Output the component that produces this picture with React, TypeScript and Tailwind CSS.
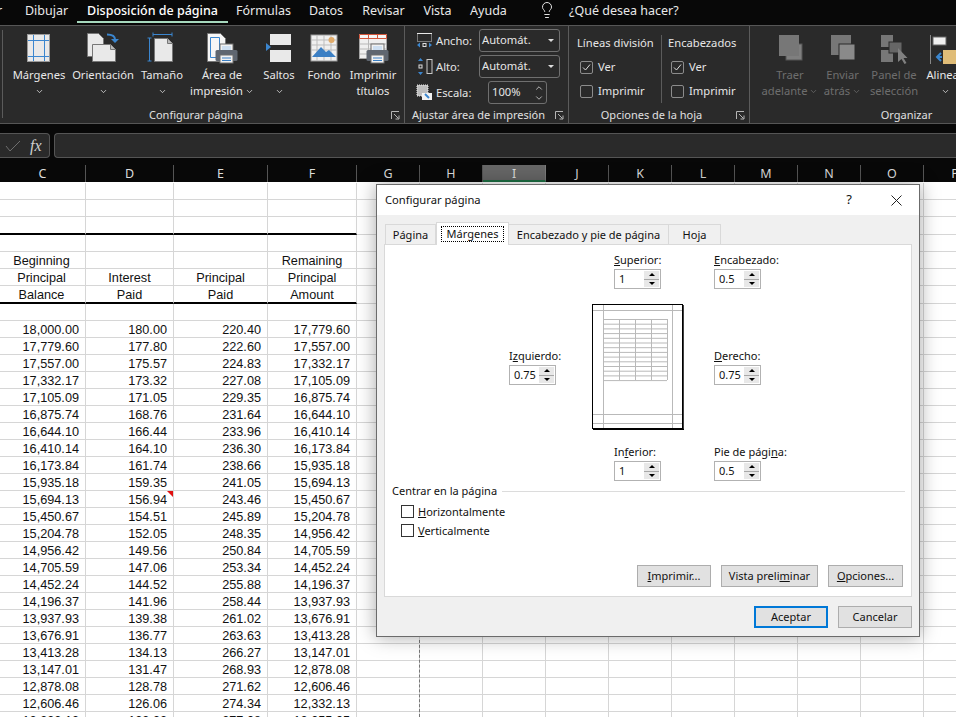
import { ChevronDown, ChevronUp, Lightbulb } from "lucide-react";

const ui = "font-['Noto_Sans',sans-serif]";

const sheetRows = [
  ["18,000.00", "180.00", "220.40", "17,779.60"],
  ["17,779.60", "177.80", "222.60", "17,557.00"],
  ["17,557.00", "175.57", "224.83", "17,332.17"],
  ["17,332.17", "173.32", "227.08", "17,105.09"],
  ["17,105.09", "171.05", "229.35", "16,875.74"],
  ["16,875.74", "168.76", "231.64", "16,644.10"],
  ["16,644.10", "166.44", "233.96", "16,410.14"],
  ["16,410.14", "164.10", "236.30", "16,173.84"],
  ["16,173.84", "161.74", "238.66", "15,935.18"],
  ["15,935.18", "159.35", "241.05", "15,694.13"],
  ["15,694.13", "156.94", "243.46", "15,450.67"],
  ["15,450.67", "154.51", "245.89", "15,204.78"],
  ["15,204.78", "152.05", "248.35", "14,956.42"],
  ["14,956.42", "149.56", "250.84", "14,705.59"],
  ["14,705.59", "147.06", "253.34", "14,452.24"],
  ["14,452.24", "144.52", "255.88", "14,196.37"],
  ["14,196.37", "141.96", "258.44", "13,937.93"],
  ["13,937.93", "139.38", "261.02", "13,676.91"],
  ["13,676.91", "136.77", "263.63", "13,413.28"],
  ["13,413.28", "134.13", "266.27", "13,147.01"],
  ["13,147.01", "131.47", "268.93", "12,878.08"],
  ["12,878.08", "128.78", "271.62", "12,606.46"],
  ["12,606.46", "126.06", "274.34", "12,332.13"],
  ["12,332.13", "123.32", "277.08", "12,055.05"],
];

const topRows: { h: string; cells: string[]; thick?: boolean }[] = [
  { h: "h-[17px]", cells: ["", "", "", ""] },
  { h: "h-[17px]", cells: ["", "", "", ""] },
  { h: "h-[18px]", cells: ["", "", "", ""], thick: true },
  { h: "h-[17px]", cells: ["", "", "", ""] },
  { h: "h-[17px]", cells: ["Beginning", "", "", "Remaining"] },
  { h: "h-[17px]", cells: ["Principal", "Interest", "Principal", "Principal"] },
  { h: "h-[18px]", cells: ["Balance", "Paid", "Paid", "Amount"], thick: true },
  { h: "h-[17px]", cells: ["", "", "", ""] },
];

const colW = ["w-[88px]", "w-[88px]", "w-[94px]", "w-[89px]"];
const extra = Array.from({ length: 10 }, (_, i) => i);

function EmptyCols() {
  return (
    <>
      {extra.map((i) => (
        <div key={i} className="h-full w-[63px] shrink-0 border-r border-b border-[#d6d6d6]" />
      ))}
    </>
  );
}

function Sheet() {
  return (
    <div className="ml-[-2px] h-[535px] overflow-hidden bg-white pt-px font-['Liberation_Sans',sans-serif] text-[12.7px] leading-[18px] text-[#111]">
      {topRows.map((r, i) => (
        <div key={i} className={`flex ${r.h}`}>
          {r.cells.map((c, j) => (
            <div
              key={j}
              className={`${colW[j]} shrink-0 border-r border-[#d6d6d6] text-center ${
                r.thick ? "border-b-2 border-b-black" : "border-b border-b-[#d6d6d6]"
              }`}
            >
              {c}
            </div>
          ))}
          <EmptyCols />
        </div>
      ))}
      {sheetRows.map((r, i) => (
        <div key={i} className="flex h-[17px]">
          {r.map((c, j) => (
            <div
              key={j}
              className={`${colW[j]} relative shrink-0 border-r border-b border-[#d6d6d6] pr-[6px] text-right`}
            >
              {c}
              {i === 10 && j === 1 && (
                <span className="absolute top-0 right-0 h-0 w-0 border-t-[6px] border-l-[6px] border-t-[#e01010] border-l-transparent" />
              )}
            </div>
          ))}
          <EmptyCols />
        </div>
      ))}
    </div>
  );
}

function Printer({ x, y }: { x: number; y: number }) {
  return (
    <g transform={`translate(${x} ${y})`}>
      <rect x="5" y="0" width="13" height="8" fill="#f2f2f2" stroke="#6d6d6d" />
      <rect x="7" y="2" width="9" height="4" fill="#cfe0f2" />
      <rect x="0.5" y="6" width="22" height="11" rx="1.5" fill="#5f6670" />
      <rect x="5" y="11" width="13" height="8" fill="#f2f2f2" stroke="#6d6d6d" />
      <path d="M7 14h9M7 16.5h9" stroke="#3a7fc4" />
    </g>
  );
}

const page = "#e9e9e9";
const blue = "#3b86cf";

function IconMargins() {
  return (
    <svg width="32" height="32" viewBox="0 0 32 32">
      <rect x="4.5" y="2.5" width="22" height="27" fill={page} stroke="#9a9a9a" />
      <path d="M10.5 3v26M21.5 3v26M5 8.5h21M5 24.5h21" stroke={blue} />
    </svg>
  );
}

function IconOrientation() {
  return (
    <svg width="32" height="32" viewBox="0 0 32 32">
      <path d="M0.5 1.5h11l5 5v18h-16z" fill={page} stroke="#777" />
      <path d="M5.5 12.5h18l5 5v12h-23z" fill={page} stroke="#777" />
      <path d="M23.5 12.5v5h5" fill="#bbb" stroke="#777" />
      <path d="M20 2.5c5 0 8 1 8 5" fill="none" stroke={blue} strokeWidth="2" />
      <path d="M24 7h8l-4 4z" fill={blue} />
    </svg>
  );
}

function IconSize() {
  return (
    <svg width="32" height="32" viewBox="0 0 32 32">
      <path d="M8.5 6.5h13l5 5v18h-18z" fill={page} stroke="#777" />
      <path d="M21.5 6.5v5h5" fill="#bbb" stroke="#777" />
      <path d="M7 2.5h19M7 0.5v4M26 0.5v4M3.5 6v23M1.5 6h4M1.5 29h4" stroke={blue} fill="none" />
    </svg>
  );
}

function IconArea() {
  return (
    <svg width="32" height="32" viewBox="0 0 32 32">
      <path d="M1.5 1.5h13l5 5v23h-18z" fill="#f6f6f6" stroke="#777" />
      <path d="M4.5 5.5h9v20h-9z" fill="none" stroke={blue} />
      <Printer x={9} y={12} />
    </svg>
  );
}

function IconBreaks() {
  return (
    <svg width="32" height="32" viewBox="0 0 32 32">
      <rect x="7" y="2" width="21" height="11" fill={page} />
      <rect x="7" y="18" width="21" height="12" fill={page} />
      <path d="M3 11l5 4-5 4z" fill={blue} />
    </svg>
  );
}

function IconBackground() {
  return (
    <svg width="32" height="32" viewBox="0 0 32 32">
      <rect x="3" y="3" width="26" height="26" fill="#f0f0f0" stroke="#9a9a9a" />
      <path d="M3 8h26M3 13h26M3 18h26M9 3v26M16 3v26M23 3v26" stroke="#bdbdbd" />
      <circle cx="23.5" cy="8" r="3" fill="#e0ab6a" />
      <path d="M4 25l9-10 5 5 3-2 7 7z" fill="#3b7fc4" />
    </svg>
  );
}

function IconTitles() {
  return (
    <svg width="32" height="32" viewBox="0 0 32 32">
      <rect x="2.5" y="2.5" width="27" height="24" fill="#f0f0f0" stroke="#a5a5a5" />
      <path d="M2.5 2.5h27v4h-27z" fill="#f6f6f6" stroke="#d2553a" />
      <path d="M11.5 3v4M20.5 3v4" stroke="#d2553a" />
      <path d="M3 12h26M3 17h26M3 22h26M11.5 7v19" stroke="#b8b8b8" />
      <Printer x={9} y={12} />
    </svg>
  );
}

function IconFront() {
  return (
    <svg width="32" height="32" viewBox="0 0 32 32">
      <rect x="12" y="12" width="16" height="16" fill="#7f7f7f" stroke="#555" />
      <rect x="5" y="3" width="20" height="21" fill="#777" />
    </svg>
  );
}

function IconBack() {
  return (
    <svg width="32" height="32" viewBox="0 0 32 32">
      <rect x="4" y="3" width="20" height="20" fill="#777" />
      <rect x="12" y="12" width="16" height="16" fill="#8a8a8a" stroke="#2b2b2b" />
    </svg>
  );
}

function IconSelection() {
  return (
    <svg width="32" height="32" viewBox="0 0 32 32">
      <rect x="3" y="3" width="12" height="12" fill="#777" />
      <rect x="3" y="18" width="12" height="12" fill="#777" />
      <rect x="11" y="10" width="13" height="11" fill="#666" stroke="#2b2b2b" />
      <path d="M20 16v14l3.5-3 3 5 2-1-3-5h4z" fill="#808080" />
    </svg>
  );
}

function IconAlign() {
  return (
    <svg width="32" height="32" viewBox="0 0 32 32">
      <path d="M1.5 3v29" stroke="#888" />
      <rect x="4" y="5" width="13" height="8" fill="#f0f0f0" stroke="#666" />
      <rect x="14" y="18" width="18" height="14" fill="#e0bd78" />
      <path d="M12 21l-4 4 4 4M8 25h5" stroke={blue} strokeWidth="2" fill="none" />
    </svg>
  );
}

const largeButtons = [
  { w: "w-[64px]", icon: <IconMargins />, top: "Márgenes", bottom: "", caret: "below" },
  { w: "w-[64px]", icon: <IconOrientation />, top: "Orientación", bottom: "", caret: "below" },
  { w: "w-[54px]", icon: <IconSize />, top: "Tamaño", bottom: "", caret: "below" },
  { w: "w-[66px]", icon: <IconArea />, top: "Área de", bottom: "impresión", caret: "inline" },
  { w: "w-[48px]", icon: <IconBreaks />, top: "Saltos", bottom: "", caret: "below" },
  { w: "w-[42px]", icon: <IconBackground />, top: "Fondo", bottom: "", caret: "" },
  { w: "w-[56px]", icon: <IconTitles />, top: "Imprimir", bottom: "títulos", caret: "" },
];

const arrangeButtons = [
  { w: "w-[52px]", icon: <IconFront />, top: "Traer", bottom: "adelante", caret: "inline", off: true },
  { w: "w-[53px]", icon: <IconBack />, top: "Enviar", bottom: "atrás", caret: "inline", off: true },
  { w: "w-[50px]", icon: <IconSelection />, top: "Panel de", bottom: "selección", caret: "", off: true },
  { w: "w-[52px]", icon: <IconAlign />, top: "Alinear", bottom: "", caret: "below", off: false },
];

function LargeButton(props: {
  w: string;
  icon: React.ReactNode;
  top: string;
  bottom: string;
  caret: string;
  off?: boolean;
}) {
  return (
    <div
      className={`${props.w} flex shrink-0 flex-col items-center text-[11.2px] leading-[16px] whitespace-nowrap ${
        props.off ? "text-[#6e6e6e]" : "text-[#e8e8e8]"
      }`}
    >
      <div className="mb-[3px] h-[32px]">{props.icon}</div>
      <span>{props.top}</span>
      <span className="flex h-[16px] items-center gap-[2px]">
        {props.bottom}
        {props.caret && <ChevronDown size={9} strokeWidth={2} />}
      </span>
    </div>
  );
}

function Launcher() {
  return (
    <svg width="9" height="9" viewBox="0 0 9 9" className="shrink-0 text-[#b5b5b5]">
      <path d="M.5 8V.5H8M3 3l4.5 4.5M4.5 8H8V4.5" stroke="currentColor" fill="none" />
    </svg>
  );
}

function RibbonGroup(props: { w: string; label: string; lx: string; children: React.ReactNode; launch?: boolean }) {
  return (
    <div className={`${props.w} flex h-full shrink-0 flex-col border-r border-[#5b5b5b]`}>
      <div className="h-[81px]">{props.children}</div>
      <div className="relative flex h-[16px] items-center justify-center text-[11px] leading-[16px] text-[#e0e0e0]">
        <span className={props.lx}>{props.label}</span>
        {props.launch && (
          <span className="absolute right-[4px] top-[4px]">
            <Launcher />
          </span>
        )}
      </div>
    </div>
  );
}

function Check({ on }: { on?: boolean }) {
  return (
    <span className="flex h-[13px] w-[13px] items-center justify-center rounded-[2px] border border-[#8c8c8c]">
      {on && (
        <svg width="9" height="9" viewBox="0 0 9 9">
          <path d="M1 4.5l2.5 2.5L8 1.5" stroke="#dcdcdc" fill="none" />
        </svg>
      )}
    </span>
  );
}

function SheetOption({ on, label }: { on?: boolean; label: string }) {
  return (
    <div className="flex h-[24px] items-center gap-[5px] pl-[3px] text-[11.2px] text-[#e6e6e6]">
      <Check on={on} />
      {label}
    </div>
  );
}

function ScaleIcon({ kind }: { kind: string }) {
  if (kind === "w")
    return (
      <svg width="17" height="17" viewBox="0 0 17 17">
        <rect x="1.5" y="1.5" width="14" height="8" fill="none" stroke="#c8c8c8" strokeDasharray="1 1" />
        <path d="M1 1.5h15" stroke="#e8e8e8" />
        <path d="M1 13l3-2.5v5zM16 13l-3-2.5v5z" fill={blue} />
        <rect x="7" y="11.5" width="3" height="3" fill="none" stroke="#ddd" />
      </svg>
    );
  if (kind === "h")
    return (
      <svg width="17" height="17" viewBox="0 0 17 17">
        <rect x="11" y="1.5" width="5" height="14" fill="none" stroke="#c8c8c8" />
        <path d="M4.5 0l2.5 3H2zM4.5 17L2 14h5z" fill={blue} />
        <rect x="3" y="7" width="3" height="3" fill="none" stroke="#ddd" />
      </svg>
    );
  return (
    <svg width="17" height="17" viewBox="0 0 17 17">
      <rect x="1" y="1" width="11" height="11" fill="#bdbdbd" stroke="#eee" strokeDasharray="1 1" />
      <rect x="6" y="9" width="10" height="7" fill="#f2f2f2" />
      <path d="M9 10l4 4" stroke={blue} strokeWidth="2" />
    </svg>
  );
}

function AutoSelect() {
  return (
    <div className="flex h-[23px] w-[81px] items-center justify-between rounded-[3px] border border-[#6f6f6f] pr-[5px] pl-[2px] text-[11.2px] text-[#e6e6e6]">
      Automát.
      <span className="h-0 w-0 border-x-[3px] border-t-[3px] border-x-transparent border-t-[#dcdcdc]" />
    </div>
  );
}

function Ribbon() {
  return (
    <div className="flex h-[99px] overflow-hidden border-y border-[#565656] bg-[#2a2a2a] pl-[2px]">
      <div className="mt-[4px] mb-[5px] w-px shrink-0 bg-[#5b5b5b]" />
      <RibbonGroup w="w-[402px]" label="Configurar página" lx="mr-[15px]" launch>
        <div className="flex pt-[6px] pl-[4px]">
          {largeButtons.map((b) => (
            <LargeButton key={b.top} {...b} />
          ))}
        </div>
      </RibbonGroup>
      <RibbonGroup w="w-[164px]" label="Ajustar área de impresión" lx="mr-[16px]" launch>
        <div className="flex flex-col gap-[3px] pt-[3px] pl-[11px] text-[11.2px] text-[#e6e6e6]">
          <div className="flex items-center">
            <ScaleIcon kind="w" />
            <span className="ml-[3px] w-[43px] pt-[2px]">Ancho:</span>
            <AutoSelect />
          </div>
          <div className="flex items-center">
            <ScaleIcon kind="h" />
            <span className="ml-[3px] w-[43px] pt-[2px]">Alto:</span>
            <AutoSelect />
          </div>
          <div className="flex items-center">
            <ScaleIcon kind="s" />
            <span className="ml-[3px] w-[52px] pt-[2px]">Escala:</span>
            <div className="flex h-[23px] w-[59px] items-center justify-between rounded-[3px] border border-[#6f6f6f] pl-[3px]">
              100%
              <span className="mr-[2px] flex flex-col text-[#cfcfcf]">
                <ChevronUp size={10} />
                <ChevronDown size={10} />
              </span>
            </div>
          </div>
        </div>
      </RibbonGroup>
      <RibbonGroup w="w-[181px]" label="Opciones de la hoja" lx="mr-[15px]" launch>
        <div className="flex pt-[9px] pl-[8px]">
          <div className="w-[85px] border-r border-[#5b5b5b]">
            <div className="h-[20px] text-[11.2px] text-[#e6e6e6]">Líneas división</div>
            <SheetOption on label="Ver" />
            <SheetOption label="Imprimir" />
          </div>
          <div className="pl-[6px]">
            <div className="h-[20px] text-[11.2px] text-[#e6e6e6]">Encabezados</div>
            <SheetOption on label="Ver" />
            <SheetOption label="Imprimir" />
          </div>
        </div>
      </RibbonGroup>
      <RibbonGroup w="w-[314px]" label="Organizar" lx="ml-[0px]">
        <div className="flex pt-[6px] pl-[14px]">
          {arrangeButtons.map((b) => (
            <LargeButton key={b.top} {...b} />
          ))}
        </div>
      </RibbonGroup>
    </div>
  );
}

const tabs = [
  { w: "w-[61px]", t: "Dibujar", a: false },
  { w: "w-[151px]", t: "Disposición de página", a: true },
  { w: "w-[71px]", t: "Fórmulas", a: false },
  { w: "w-[54px]", t: "Datos", a: false },
  { w: "w-[61px]", t: "Revisar", a: false },
  { w: "w-[47px]", t: "Vista", a: false },
  { w: "w-[55px]", t: "Ayuda", a: false },
];

const columnHeads = [
  { w: "w-[86px]", t: "C", on: false },
  { w: "w-[88px]", t: "D", on: false },
  { w: "w-[94px]", t: "E", on: false },
  { w: "w-[89px]", t: "F", on: false },
  { w: "w-[63px]", t: "G", on: false },
  { w: "w-[63px]", t: "H", on: false },
  { w: "w-[63px]", t: "I", on: true },
  { w: "w-[63px]", t: "J", on: false },
  { w: "w-[63px]", t: "K", on: false },
  { w: "w-[63px]", t: "L", on: false },
  { w: "w-[63px]", t: "M", on: false },
  { w: "w-[63px]", t: "N", on: false },
  { w: "w-[63px]", t: "O", on: false },
  { w: "w-[63px]", t: "P", on: false },
];

function Spinner({ value }: { value: string }) {
  return (
    <div className="flex h-[20px] w-[47px] items-center border border-[#b2b2b2] bg-white pl-[4px] text-[11px] text-[#111]">
      <span>{value}</span>
      <div className="mr-[1px] ml-auto flex h-[16px] w-[15px] flex-col gap-px bg-[#a8a8a8]">
        <div className="flex flex-1 items-center justify-center bg-[#e8e8e8]">
          <span className="h-0 w-0 border-x-[3px] border-b-[3px] border-x-transparent border-b-black" />
        </div>
        <div className="flex flex-1 items-center justify-center bg-[#e8e8e8]">
          <span className="h-0 w-0 border-x-[3px] border-t-[3px] border-x-transparent border-t-black" />
        </div>
      </div>
    </div>
  );
}

function Field({ label, value, className = "" }: { label: React.ReactNode; value: string; className?: string }) {
  return (
    <div className={`w-[47px] shrink-0 ${className}`}>
      <div className="h-[16px] text-[11px] leading-[14px] whitespace-nowrap text-[#111]">{label}</div>
      <Spinner value={value} />
    </div>
  );
}

function PagePreview() {
  const rows = Array.from({ length: 14 }, (_, i) => 15 + i * 4.7);
  return (
    <svg width="92" height="126" viewBox="0 0 92 126" className="ml-[36px] shrink-0">
      <rect x="0.5" y="0.5" width="90" height="124" fill="#fff" stroke="#000" />
      <path d="M91 1v125M1 125.5h91" stroke="#000" strokeWidth="1.5" />
      <path d="M11.5 1v123M80.5 1v123M1 6.5h89M1 110.5h89M1 119.5h89" stroke="#b9b9b9" />
      {rows.map((y) => (
        <path key={y} d={`M11 ${y + 0.5}h64`} stroke="#b9b9b9" />
      ))}
      <path d="M27.5 15v61M43.5 15v61M59.5 15v61M75.5 15v61" stroke="#b9b9b9" />
    </svg>
  );
}

function DialogButton(props: { w: string; children: React.ReactNode; main?: boolean }) {
  return (
    <div
      className={`${props.w} flex h-[22px] items-center justify-center bg-[#e1e1e1] text-[11px] text-[#111] ${
        props.main ? "border-2 border-[#0078d7]" : "border border-[#adadad]"
      }`}
    >
      {props.children}
    </div>
  );
}

function PageSetup() {
  return (
    <div className="absolute top-[184px] left-[376px] h-[453px] w-[544px] border border-[#6b6b6b] bg-[#f0f0f0] shadow-[0_0_18px_rgba(0,0,0,0.35)]">
      <div className="flex h-[30px] items-center bg-white pr-[17px] pl-[8px] text-[11.2px] text-[#111]">
        <span>Configurar página</span>
        <span className="mr-[39px] ml-auto text-[13px]">?</span>
        <svg width="11" height="11" viewBox="0 0 11 11">
          <path d="M.5.5l10 10M10.5.5l-10 10" stroke="#222" />
        </svg>
      </div>

      <div className="px-[7px] pt-[7px]">
        <div className="relative z-10 flex h-[22px] items-end pl-[1px] text-[11px] leading-[20px] text-[#111]">
          <div className="h-[20px] w-[51px] border border-b-0 border-[#d9d9d9] text-center">Página</div>
          <div className="-mb-px h-[23px] w-[73px] border border-b-0 border-[#d9d9d9] bg-white px-[4px] pt-[3px]">
            <div className="h-[16px] border border-dotted border-black text-center leading-[14px]">Márgenes</div>
          </div>
          <div className="h-[20px] w-[160px] border-t border-r border-[#d9d9d9] text-center">
            Encabezado y pie de página
          </div>
          <div className="h-[20px] w-[52px] border-t border-r border-[#d9d9d9] text-center">Hoja</div>
        </div>

        <div className="h-[353px] w-[528px] border border-[#d9d9d9] bg-white">
          <div className="flex pt-[8px] pl-[229px]">
            <Field label={<><u>S</u>uperior:</>} value="1" />
            <Field className="ml-[53px]" label={<><u>E</u>ncabezado:</>} value="0.5" />
          </div>
          <div className="mt-[15px] flex pl-[124px]">
            <Field className="mt-[45px]" label={<>I<u>z</u>quierdo:</>} value="0.75" />
            <PagePreview />
            <Field className="mt-[45px] ml-[30px]" label={<><u>D</u>erecho:</>} value="0.75" />
          </div>
          <div className="mt-[15px] flex pl-[229px]">
            <Field label={<>In<u>f</u>erior:</>} value="1" />
            <Field className="ml-[53px]" label={<>Pie de pági<u>n</u>a:</>} value="0.5" />
          </div>

          <div className="mt-[2px] flex h-[16px] items-center gap-[5px] pr-[6px] pl-[7px] text-[11px] text-[#111]">
            <span>Centrar en la página</span>
            <span className="h-px flex-1 bg-[#dcdcdc]" />
          </div>
          <div className="mt-[6px] pl-[16px] text-[11px] text-[#111]">
            <div className="flex h-[19px] items-start gap-[4px]">
              <span className="h-[13px] w-[13px] border border-[#333]" />
              <span className="-mt-[1px]"><u>H</u>orizontalmente</span>
            </div>
            <div className="flex h-[19px] items-start gap-[4px]">
              <span className="h-[13px] w-[13px] border border-[#333]" />
              <span className="-mt-[1px]"><u>V</u>erticalmente</span>
            </div>
          </div>
          <div className="mt-[22px] flex justify-end gap-[10px] pr-[8px]">
            <DialogButton w="w-[74px]"><span><u>I</u>mprimir...</span></DialogButton>
            <DialogButton w="w-[97px]"><span>Vista preli<u>m</u>inar</span></DialogButton>
            <DialogButton w="w-[75px]"><span><u>O</u>pciones...</span></DialogButton>
          </div>
        </div>

        <div className="mt-[9px] flex justify-end gap-[10px]">
          <DialogButton w="w-[74px]" main>Aceptar</DialogButton>
          <DialogButton w="w-[74px]">Cancelar</DialogButton>
        </div>
      </div>
    </div>
  );
}

export default function App() {
  return (
    <div className={`${ui} relative h-[717px] w-[956px] overflow-hidden bg-[#080808]`}>
      {/* Menu tabs */}
      <div className="flex h-[25px] items-start text-[12.5px] leading-[22px] text-[#e8e8e8]">
        <span className="-ml-[3px] w-[19px] shrink-0 whitespace-nowrap">r</span>
        {tabs.map((t) => (
          <div
            key={t.t}
            className={`${t.w} h-[23px] shrink-0 text-center ${t.a ? "border-b-[2px] border-[#a6d8bd] font-medium text-white" : ""}`}
          >
            {t.t}
          </div>
        ))}
        <Lightbulb size={18} strokeWidth={1.3} className="mt-[1px] ml-[22px] shrink-0" />
        <span className="ml-[13px] whitespace-nowrap">¿Qué desea hacer?</span>
      </div>

      <Ribbon />

      {/* Formula bar */}
      <div className="mt-[9px] flex h-[25px] gap-[4px]">
        <div className="flex h-full w-[50px] items-center gap-[9px] rounded-r-[4px] border border-l-0 border-[#555] bg-[#2a2a2a] pl-[5px]">
          <svg width="16" height="12" viewBox="0 0 16 12">
            <path d="M1 6l4 5 10-10" stroke="#6e6e6e" fill="none" />
          </svg>
          <span className="font-['Liberation_Serif',serif] text-[16px] text-[#d0d0d0] italic">fx</span>
        </div>
        <div className="h-full flex-1 rounded-l-[4px] border border-r-0 border-[#555] bg-[#2a2a2a]" />
      </div>

      {/* Column letters */}
      <div className="mt-[7px] flex h-[17px] text-[12.5px] leading-[17px] text-[#dcdcdc]">
        {columnHeads.map((c) => (
          <div
            key={c.t}
            className={`${c.w} shrink-0 border-r text-center ${
              c.on ? "border-b-2 border-r-[#7a7a7a] border-b-[#1e7145] bg-[#666]" : "border-[#555]"
            }`}
          >
            {c.t}
          </div>
        ))}
      </div>

      <Sheet />

      {/* Page break marker below the dialog */}
      <div className="absolute top-[640px] left-[419px] h-[77px] border-l border-dashed border-[#777]" />

      <PageSetup />
    </div>
  );
}
